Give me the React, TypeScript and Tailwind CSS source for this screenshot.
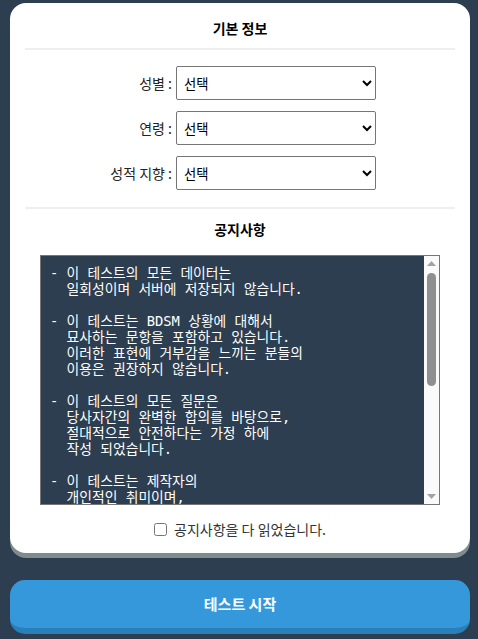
import React from "react";

const notice = `- 이 테스트의 모든 데이터는
  일회성이며 서버에 저장되지 않습니다.

- 이 테스트는 BDSM 상황에 대해서
  묘사하는 문항을 포함하고 있습니다.
  이러한 표현에 거부감을 느끼는 분들의
  이용은 권장하지 않습니다.

- 이 테스트의 모든 질문은
  당사자간의 완벽한 합의를 바탕으로,
  절대적으로 안전하다는 가정 하에
  작성 되었습니다.

- 이 테스트는 제작자의
  개인적인 취미이며,
  전문적인 심리 검사가 아닙니다.
  결과는 참고용으로만 활용해 주세요.

- 본 테스트는 성인을 대상으로 합니다.
  미성년자의 이용을 금합니다.

- 테스트 결과에 대한 해석은
  개인마다 다를 수 있으며,
  어떠한 책임도 지지 않습니다.`;

function Row({ label }: { label: string }) {
  return (
    <div className="flex items-center">
      <label className="w-[151px] text-right text-[14px] text-[#222] pr-[4px]">{label}</label>
      <select
        className="w-[200px] h-[34px] border border-[#767676] rounded-[2px] bg-white text-[13.333px] text-black pl-[3px]"
        style={{ appearance: "auto" }}
      >
        <option>선택</option>
        <option>남성</option>
        <option>여성</option>
      </select>
    </div>
  );
}

export default function App() {
  return (
    <div
      className="min-h-[639px] w-full bg-[#2c3e50] pl-[10px] pr-[8px] pt-[3px]"
      style={{ fontFamily: '"Noto Sans CJK KR", "Noto Sans", sans-serif' }}
    >
      <div className="bg-white rounded-[16px] shadow-[0_5px_0_#7f8c8d] px-[15px] pt-[14px] pb-[14px]">
        <h2 className="text-center text-[14px] font-bold text-black leading-[22px]">기본 정보</h2>
        <div className="mt-[9px] h-[2px] bg-[#eeeeee]" />
        <div className="mt-[16px] flex flex-col gap-[11px]">
          <Row label="성별 :" />
          <Row label="연령 :" />
          <Row label="성적 지향 :" />
        </div>
        <div className="mt-[17px] h-[2px] bg-[#eeeeee]" />
        <h2 className="mt-[9px] text-center text-[14px] font-bold text-black leading-[22px]">공지사항</h2>
        <div className="mt-[15px] flex justify-center">
          <div className="w-[400px] h-[250px] border border-[#767676] flex bg-[#2c3e50]">
            <textarea
              readOnly
              value={notice}
              className="flex-1 h-full resize-none bg-[#2c3e50] text-white text-[13.8px] leading-[16px] pl-[9px] pt-[9px] overflow-hidden whitespace-pre outline-none"
              style={{ fontFamily: '"DejaVu Sans Mono", "Noto Sans CJK KR", monospace' }}
            />
            <div className="w-[15px] h-full bg-[#fafafa] flex flex-col items-center">
              <div className="h-[15px] w-full flex items-center justify-center">
                <svg width="9" height="5" viewBox="0 0 9 5">
                  <polygon points="0,5 4.5,0 9,5" fill="#a3a3a3" />
                </svg>
              </div>
              <div className="mt-[2px] w-[9px] h-[113px] rounded-full bg-[#8f8f8f]" />
              <div className="flex-1" />
              <div className="h-[15px] w-full flex items-center justify-center">
                <svg width="9" height="5" viewBox="0 0 9 5">
                  <polygon points="0,0 9,0 4.5,5" fill="#a3a3a3" />
                </svg>
              </div>
            </div>
          </div>
        </div>
        <div className="mt-[14px] flex items-center justify-center gap-[7px]">
          <input type="checkbox" className="w-[13px] h-[13px]" />
          <span className="text-[14px] text-[#333] leading-[20px]">공지사항을 다 읽었습니다.</span>
        </div>
      </div>
      <button className="mt-[27px] w-full h-[54px] rounded-[15px] bg-[#3498db] border-b-[6px] border-[#2980b9] text-white text-[15px] font-bold">
        테스트 시작
      </button>
    </div>
  );
}
